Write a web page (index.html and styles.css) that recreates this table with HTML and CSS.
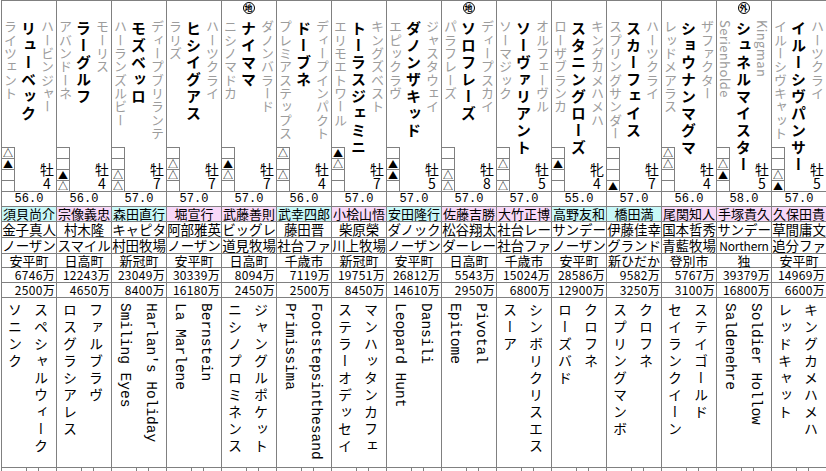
FILE: index.html
```html
<!DOCTYPE html>
<html lang="ja">
<head>
<meta charset="utf-8">
<title>出馬表</title>
<link rel="stylesheet" href="styles.css">
</head>
<body>
<div class="table">

<div class="col">
 <div class="head">
  <div class="dam">ライツェント</div><div class="name">リューベック</div><div class="sire">ハービンジャー</div>
  <div class="boxes"><i>△</i><i>▲</i><i></i><i></i></div><div class="sex">牡4</div>
 </div>
 <div class="wt">56.0</div><div class="tr west">須貝尚介</div><div class="own">金子真人</div><div class="brd">ノーザン</div><div class="loc">安平町</div><div class="pz">6746万</div><div class="pz">2500万</div>
 <div class="ped"><div class="pl">スペシャルウィーク</div><div class="pl">ソニンク</div></div>
 <div class="foot"><i></i><i></i><i></i></div>
</div>

<div class="col">
 <div class="head">
  <div class="dam">アバンドーネ</div><div class="name">ラーグルフ</div><div class="sire">モーリス</div>
  <div class="boxes"><i></i><i></i><i>▲</i><i>△</i></div><div class="sex">牡4</div>
 </div>
 <div class="wt">56.0</div><div class="tr east">宗像義忠</div><div class="own">村木隆</div><div class="brd">スマイル</div><div class="loc">日高町</div><div class="pz">12243万</div><div class="pz">4650万</div>
 <div class="ped"><div class="pl">ファルブラヴ</div><div class="pl">ロスグラシアレス</div></div>
 <div class="foot"><i></i><i></i><i></i></div>
</div>

<div class="col">
 <div class="head">
  <div class="dam">ハーランズルビー</div><div class="name">モズベッロ</div><div class="sire">ディープブリランテ</div>
  <div class="boxes"><i></i><i></i><i>△</i><i>△</i></div><div class="sex">牡7</div>
 </div>
 <div class="wt">57.0</div><div class="tr west">森田直行</div><div class="own">キャピタ</div><div class="brd">村田牧場</div><div class="loc">新冠町</div><div class="pz">23049万</div><div class="pz">8400万</div>
 <div class="ped"><div class="pl"><span class="en">Harlan's Holiday</span></div><div class="pl"><span class="en">Smiling Eyes</span></div></div>
 <div class="foot"><i></i><i></i><i></i></div>
</div>

<div class="col">
 <div class="head">
  <div class="dam">ラリズ</div><div class="name">ヒシイグアス</div><div class="sire">ハーツクライ</div>
  <div class="boxes"><i></i><i>△</i><i>△</i><i></i></div><div class="sex">牡7</div>
 </div>
 <div class="wt">57.0</div><div class="tr east">堀宣行</div><div class="own">阿部雅英</div><div class="brd">ノーザン</div><div class="loc">安平町</div><div class="pz">30339万</div><div class="pz">16180万</div>
 <div class="ped"><div class="pl"><span class="en">Bernstein</span></div><div class="pl"><span class="en">La Marlene</span></div></div>
 <div class="foot"><i></i><i></i><i></i></div>
</div>

<div class="col">
 <div class="head">
  <div class="mark"><span class="badge">地</span></div>
  <div class="dam">ニシノマドカ</div><div class="name">ナイママ</div><div class="sire">ダノンバラード</div>
  <div class="boxes"><i></i><i>▲</i><i>△</i><i></i></div><div class="sex">牡7</div>
 </div>
 <div class="wt">57.0</div><div class="tr east">武藤善則</div><div class="own">ビッグレ</div><div class="brd">道見牧場</div><div class="loc">日高町</div><div class="pz">8094万</div><div class="pz">2450万</div>
 <div class="ped"><div class="pl">ジャングルポケット</div><div class="pl">ニシノプロミネンス</div></div>
 <div class="foot"><i></i><i></i><i></i></div>
</div>

<div class="col">
 <div class="head">
  <div class="dam">プレミアステップス</div><div class="name">ドーブネ</div><div class="sire">ディープインパクト</div>
  <div class="boxes"><i>△</i><i></i><i>△</i><i></i></div><div class="sex">牡4</div>
 </div>
 <div class="wt">56.0</div><div class="tr west">武幸四郎</div><div class="own">藤田晋</div><div class="brd">社台ファ</div><div class="loc">千歳市</div><div class="pz">7119万</div><div class="pz">2500万</div>
 <div class="ped"><div class="pl"><span class="en">Footstepsinthesand</span></div><div class="pl"><span class="en">Primissima</span></div></div>
 <div class="foot"><i></i><i></i><i></i></div>
</div>

<div class="col">
 <div class="head">
  <div class="dam">エリモエトワール</div><div class="name">トーラスジェミニ</div><div class="sire">キングズベスト</div>
  <div class="boxes"><i>▲</i><i>△</i><i></i><i></i></div><div class="sex">牡7</div>
 </div>
 <div class="wt">57.0</div><div class="tr east">小桧山悟</div><div class="own">柴原榮</div><div class="brd">川上牧場</div><div class="loc">新冠町</div><div class="pz">19751万</div><div class="pz">8450万</div>
 <div class="ped"><div class="pl">マンハッタンカフェ</div><div class="pl">ステラーオデッセイ</div></div>
 <div class="foot"><i></i><i></i><i></i></div>
</div>

<div class="col">
 <div class="head">
  <div class="dam">エピックラヴ</div><div class="name">ダノンザキッド</div><div class="sire">ジャスタウェイ</div>
  <div class="boxes"><i></i><i>▲</i><i>▲</i><i></i></div><div class="sex">牡5</div>
 </div>
 <div class="wt">57.0</div><div class="tr west">安田隆行</div><div class="own">ダノック</div><div class="brd">ノーザン</div><div class="loc">安平町</div><div class="pz">26812万</div><div class="pz">14610万</div>
 <div class="ped"><div class="pl"><span class="en">Dansili</span></div><div class="pl"><span class="en">Leopard Hunt</span></div></div>
 <div class="foot"><i></i><i></i><i></i></div>
</div>

<div class="col">
 <div class="head">
  <div class="mark"><span class="badge">地</span></div>
  <div class="dam">パラフレーズ</div><div class="name">ソロフレーズ</div><div class="sire">ディープスカイ</div>
  <div class="boxes"><i></i><i></i><i>△</i><i>△</i></div><div class="sex">牡8</div>
 </div>
 <div class="wt">57.0</div><div class="tr east">佐藤吉勝</div><div class="own">松谷翔太</div><div class="brd">ダーレー</div><div class="loc">日高町</div><div class="pz">5543万</div><div class="pz">2950万</div>
 <div class="ped"><div class="pl"><span class="en">Pivotal</span></div><div class="pl"><span class="en">Epitome</span></div></div>
 <div class="foot"><i></i><i></i><i></i></div>
</div>

<div class="col">
 <div class="head">
  <div class="dam">ソーマジック</div><div class="name">ソーヴァリアント</div><div class="sire">オルフェーヴル</div>
  <div class="boxes"><i></i><i>△</i><i></i><i>△</i></div><div class="sex">牡5</div>
 </div>
 <div class="wt">57.0</div><div class="tr east">大竹正博</div><div class="own">社台レー</div><div class="brd">社台ファ</div><div class="loc">千歳市</div><div class="pz">15024万</div><div class="pz">6800万</div>
 <div class="ped"><div class="pl">シンボリクリスエス</div><div class="pl">スーア</div></div>
 <div class="foot"><i></i><i></i><i></i></div>
</div>

<div class="col">
 <div class="head">
  <div class="dam">ローザブランカ</div><div class="name">スタニングローズ</div><div class="sire">キングカメハメハ</div>
  <div class="boxes"><i></i><i>▲</i><i></i><i></i></div><div class="sex">牝4</div>
 </div>
 <div class="wt">55.0</div><div class="tr west">高野友和</div><div class="own">サンデー</div><div class="brd">ノーザン</div><div class="loc">安平町</div><div class="pz">28586万</div><div class="pz">12900万</div>
 <div class="ped"><div class="pl">クロフネ</div><div class="pl">ローズバド</div></div>
 <div class="foot"><i></i><i></i><i></i></div>
</div>

<div class="col">
 <div class="head">
  <div class="dam">スプリングサンダー</div><div class="name">スカーフェイス</div><div class="sire">ハーツクライ</div>
  <div class="boxes"><i></i><i></i><i></i><i>▲</i></div><div class="sex">牡7</div>
 </div>
 <div class="wt">57.0</div><div class="tr west">橋田満</div><div class="own">伊藤佳幸</div><div class="brd">グランド</div><div class="loc">新ひだか</div><div class="pz">9582万</div><div class="pz">3250万</div>
 <div class="ped"><div class="pl">クロフネ</div><div class="pl">スプリングマンボ</div></div>
 <div class="foot"><i></i><i></i><i></i></div>
</div>

<div class="col">
 <div class="head">
  <div class="dam">レッドメアラス</div><div class="name">ショウナンマグマ</div><div class="sire">ザファクター</div>
  <div class="boxes"><i>△</i><i>△</i><i></i><i></i></div><div class="sex">牡4</div>
 </div>
 <div class="wt">56.0</div><div class="tr east">尾関知人</div><div class="own">国本哲秀</div><div class="brd">青藍牧場</div><div class="loc">登別市</div><div class="pz">5767万</div><div class="pz">3100万</div>
 <div class="ped"><div class="pl">ステイゴールド</div><div class="pl">セイランクイーン</div></div>
 <div class="foot"><i></i><i></i><i></i></div>
</div>

<div class="col">
 <div class="head">
  <div class="mark"><span class="badge">外</span></div>
  <div class="dam"><span class="enh">Serienholde</span></div><div class="name">シュネルマイスター</div><div class="sire"><span class="enh">Kingman</span></div>
  <div class="boxes"><i></i><i>△</i><i>▲</i><i></i></div><div class="sex">牡5</div>
 </div>
 <div class="wt">58.0</div><div class="tr east">手塚貴久</div><div class="own">サンデー</div><div class="brd"><span class="enb">Northern</span></div><div class="loc">独</div><div class="pz">39379万</div><div class="pz">16800万</div>
 <div class="ped"><div class="pl"><span class="en">Soldier Hollow</span></div><div class="pl"><span class="en">Saldenehre</span></div></div>
 <div class="foot"><i></i><i></i><i></i></div>
</div>

<div class="col">
 <div class="head">
  <div class="dam">イルーシヴキャット</div><div class="name">イルーシヴパンサー</div><div class="sire">ハーツクライ</div>
  <div class="boxes"><i></i><i></i><i>△</i><i>▲</i></div><div class="sex">牡5</div>
 </div>
 <div class="wt">57.0</div><div class="tr east">久保田貴</div><div class="own">草間庸文</div><div class="brd">追分ファ</div><div class="loc">安平町</div><div class="pz">14969万</div><div class="pz">6600万</div>
 <div class="ped"><div class="pl">キングカメハメハ</div><div class="pl">レッドキャット</div></div>
 <div class="foot"><i></i><i></i><i></i></div>
</div>

</div>
</body>
</html>
```

FILE: styles.css
```css
* { box-sizing: border-box; }
html, body { margin: 0; padding: 0; background: #fff; }
body {
  font-family: "Noto Sans CJK JP", "Noto Sans", sans-serif;
  color: #000;
  overflow: hidden;
}
.table {
  display: flex;
  margin-left: 1px;
}
.col {
  width: 55px;
  flex: none;
  border-left: 1px solid #808080;
  border-top: 1px solid #808080;
  display: flex;
  flex-direction: column;
}
.head {
  height: 191px;
  border-bottom: 1px solid #808080;
  display: grid;
  grid-template-columns: 17px 19px 18px;
  grid-template-rows: 19px 127px 44px;
  grid-template-areas:
    ". mark ."
    "dam name sire"
    "box name sex";
}
.mark {
  grid-area: mark;
  display: flex;
  justify-content: center;
  align-items: flex-start;
}
.badge {
  margin-top: 1px;
  width: 12px;
  height: 12px;
  border: 1px solid #000;
  border-radius: 50%;
  font-size: 8px;
  line-height: 10px;
  text-align: center;
  font-weight: 700;
}
.dam, .sire {
  writing-mode: vertical-rl;
  color: #9c9c9c;
  font-size: 13px;
  letter-spacing: 0.3px;
  white-space: nowrap;
  min-height: 0;
}
.dam { grid-area: dam; line-height: 17px; }
.sire { grid-area: sire; line-height: 18px; }
.enh { letter-spacing: 0.4px; }
.name {
  grid-area: name;
  writing-mode: vertical-rl;
  font-weight: 700;
  font-size: 15px;
  letter-spacing: 2px;
  line-height: 19px;
  padding-top: 1px;
  white-space: nowrap;
  min-height: 0;
}
.boxes {
  grid-area: box;
  width: 13px;
  display: flex;
  flex-direction: column;
  align-self: end;
}
.boxes i {
  display: block;
  height: 11px;
  border-top: 1px solid #808080;
  border-right: 1px solid #808080;
  font-style: normal;
  font-size: 10px;
  line-height: 10px;
  text-align: center;
}
.sex {
  grid-area: sex;
  align-self: end;
  justify-self: end;
  margin-right: 2px;
  writing-mode: vertical-rl;
  text-orientation: upright;
  font-size: 14px;
  line-height: 14px;
  height: 29px;
  width: 14px;
  padding-top: 1px;
  white-space: nowrap;
}
.wt, .tr, .own, .brd, .loc, .pz {
  border-bottom: 1px solid #808080;
  white-space: nowrap;
  text-align: center;
}
.wt {
  height: 15px;
  font-family: "Liberation Mono", monospace;
  font-size: 12px;
  line-height: 14px;
}
.tr {
  height: 15px;
  font-size: 13px;
  line-height: 14px;
}
.west { background: #c8f8f8; }
.east { background: #f8d8f8; }
.own, .brd {
  height: 16px;
  font-size: 13.5px;
  line-height: 15px;
  letter-spacing: -0.1px;
}
.enb { font-size: 12px; letter-spacing: -0.2px; }
.loc {
  height: 14px;
  font-size: 13px;
  line-height: 13px;
}
.pz {
  height: 15px;
  font-size: 12px;
  line-height: 14px;
  text-align: right;
  padding-right: 1px;
  letter-spacing: 0.3px;
}
.ped {
  height: 170px;
  border-bottom: 1px solid #808080;
  display: flex;
  flex-direction: row-reverse;
  padding: 5px 2px 0 0;
  font-size: 14px;
  letter-spacing: 3px;
}
.pl {
  writing-mode: vertical-rl;
  width: 26px;
  line-height: 26px;
  white-space: nowrap;
  flex: none;
}
.en {
  font-family: "Liberation Mono", monospace;
  font-size: 14.5px;
  letter-spacing: 0;
}
.foot {
  display: flex;
  height: 8px;
}
.foot i { display: block; }
.foot i:nth-child(1) { width: 24px; }
.foot i:nth-child(2) { width: 12px; border-left: 1px solid #808080; }
.foot i:nth-child(3) { flex: 1; border-left: 1px solid #808080; }
```
